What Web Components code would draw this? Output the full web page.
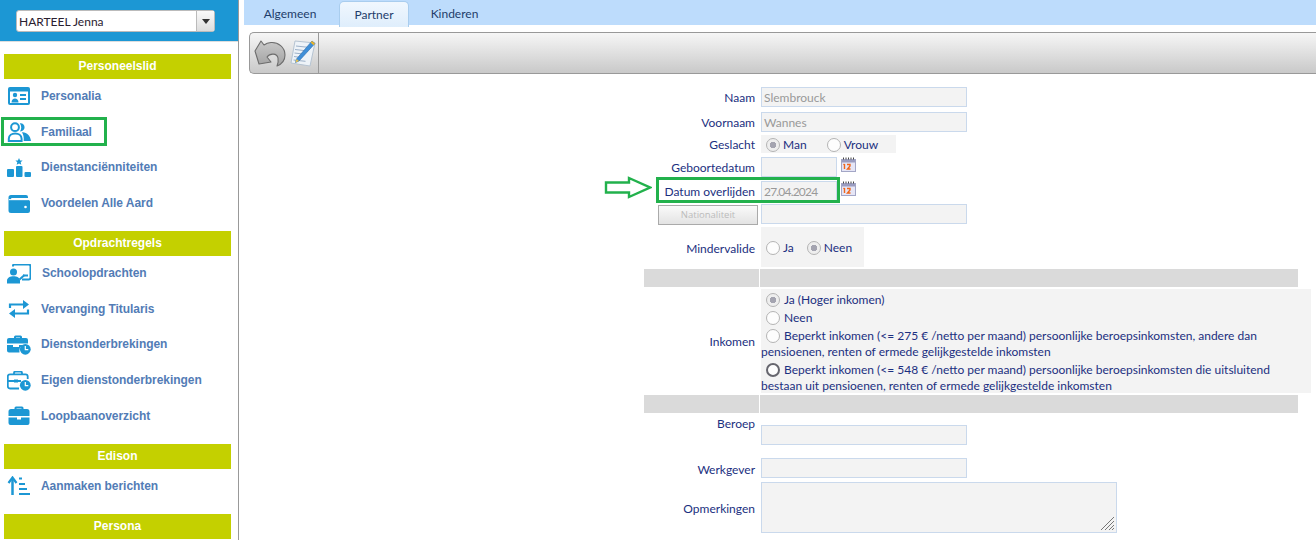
<!DOCTYPE html>
<html lang="nl"><head><meta charset="utf-8"><title>Familiaal</title>
<style>html,body{margin:0;padding:0;background:#fff;height:540px;overflow:hidden;font-family:Lato,"Open Sans",sans-serif}</style>
</head><body>
<app-shell>
  <side-bar slot="side" person="HARTEEL Jenna">
    <menu-section title="Personeelslid">
      <menu-item icon="card">Personalia</menu-item>
      <menu-item icon="family">Familiaal</menu-item>
      <menu-item icon="rank">Dienstanciënniteiten</menu-item>
      <menu-item icon="wallet">Voordelen Alle Aard</menu-item>
    </menu-section>
    <menu-section title="Opdrachtregels">
      <menu-item icon="school" shift>Schoolopdrachten</menu-item>
      <menu-item icon="swap">Vervanging Titularis</menu-item>
      <menu-item icon="caseclock">Dienstonderbrekingen</menu-item>
      <menu-item icon="caseoutline">Eigen dienstonderbrekingen</menu-item>
      <menu-item icon="case">Loopbaanoverzicht</menu-item>
    </menu-section>
    <menu-section title="Edison">
      <menu-item icon="sort">Aanmaken berichten</menu-item>
    </menu-section>
    <menu-section title="Persona"></menu-section>
  </side-bar>
  <tab-bar slot="main"><tab-item>Algemeen</tab-item><tab-item active>Partner</tab-item><tab-item>Kinderen</tab-item></tab-bar>
  <tool-bar slot="main"></tool-bar>
  <partner-form slot="main">
    <form-row label="Naam" h="25" pt="2"><text-field w="206" value="Slembrouck"></text-field></form-row>
    <form-row label="Voornaam" h="25" pt="2"><text-field w="206" value="Wannes"></text-field></form-row>
    <form-row label="Geslacht" h="20" lb="2"><radio-group w="135" h="18" gap="20"><radio-opt checked>Man</radio-opt><radio-opt>Vrouw</radio-opt></radio-group></form-row>
    <form-row label="Geboortedatum" h="24" pt="2"><text-field w="76"></text-field><cal-icon></cal-icon></form-row>
    <form-row label="Datum overlijden" h="24" pt="2"><text-field w="76" value="27.04.2024" ls="-.8"></text-field><cal-icon></cal-icon></form-row>
    <form-row h="24" pt="1"><nat-button slot="label">Nationaliteit</nat-button><text-field w="206"></text-field></form-row>
    <form-row label="Mindervalide" h="42"><radio-group w="103" h="40" gap="13"><radio-opt>Ja</radio-opt><radio-opt checked>Neen</radio-opt></radio-group></form-row>
    <form-sep></form-sep>
    <form-row label="Inkomen" h="106" lb="1">
      <income-box>
        <radio-opt checked block>Ja (Hoger inkomen)</radio-opt>
        <radio-opt block>Neen</radio-opt>
        <radio-opt block wrap>Beperkt inkomen (&lt;= 275 € /netto per maand) persoonlijke beroepsinkomsten, andere dan pensioenen, renten of ermede gelijkgestelde inkomsten</radio-opt>
        <radio-opt block wrap focus>Beperkt inkomen (&lt;= 548 € /netto per maand) persoonlijke beroepsinkomsten die uitsluitend bestaan uit pensioenen, renten of ermede gelijkgestelde inkomsten</radio-opt>
      </income-box>
    </form-row>
    <form-sep></form-sep>
    <form-row label="Beroep" h="41" pt="10" labeltop><text-field w="206"></text-field></form-row>
    <form-row label="Werkgever" h="26" pt="2"><text-field w="206"></text-field></form-row>
    <form-row label="Opmerkingen" h="58" lb="5"><text-area></text-area></form-row>
  </partner-form>
  <note-box style="left:1px;top:117px;width:100px;height:23px"></note-box>
  <note-box style="left:656px;top:177px;width:178px;height:20px"></note-box>
  <note-arrow style="left:604px;top:176px"></note-arrow>
</app-shell>
<script>
const def=(name,css,html,extra)=>{
  customElements.define(name,class extends HTMLElement{
    connectedCallback(){
      if(this.shadowRoot)return;
      const s=this.attachShadow({mode:'open'});
      s.innerHTML='<style>'+css+'</style>'+(typeof html==='function'?html(this):html);
      if(extra)extra(this,s);
    }
  });
};
const B='#1c97d4';
const ICONS={
card:`<rect x="1" y="0" width="22" height="18" rx="2" fill="${B}"/><rect x="3" y="4.500" width="18" height="11.500" fill="#fff"/><circle cx="8" cy="8" r="2.200" fill="${B}"/><path d="M4.500 15.500c0-5.400 7-5.400 7 0z" fill="${B}"/><path d="M13 8h6M13 12h6" stroke="${B}" stroke-width="2"/>`,
family:`<circle cx="8" cy="5.200" r="3.900" fill="none" stroke="${B}" stroke-width="2"/><path d="M12.800 1.300c5.600-.9 7 7.700.2 8.200 1.800-2.400 1.600-5.800-.2-8.200z" fill="${B}"/><path d="M1.800 19v-2.300c0-7 12.800-7 12.800 0V19z" fill="none" stroke="${B}" stroke-width="2"/><path d="M15 10.300c4.500-.4 8.500 3.300 9 8.700h-7.300c.3-3.500-.2-6.200-1.700-8.700z" fill="${B}"/>`,
rank:`<path d="M12 0l1.100 2.400 2.500.2-1.900 1.700.6 2.500-2.300-1.300-2.300 1.300.6-2.500-1.900-1.700 2.500-.2z" fill="${B}"/><rect x="0" y="11" width="7" height="8" rx="1" fill="${B}"/><rect x="9" y="8" width="6.500" height="11" rx="1" fill="${B}"/><rect x="17.500" y="14" width="6.500" height="5" rx="1" fill="${B}"/>`,
wallet:`<path d="M4 1h15a2 2 0 0 1 2 2v1H5a1 1 0 0 0 0 2h16.500a1.500 1.500 0 0 1 1.500 1.500V17a2 2 0 0 1-2 2H4a2.500 2.500 0 0 1-2.500-2.500V3.500A2.500 2.500 0 0 1 4 1z" fill="${B}"/><path d="M2 5h19.500v1.200H2z" fill="#fff" opacity=".9"/><circle cx="18.500" cy="13" r="1.300" fill="#fff"/>`,
school:`<path d="M6 2.500V1.800A1.300 1.300 0 0 1 7.300 .5h14.400A1.800 1.800 0 0 1 23.500 2.300v11.400a1.800 1.800 0 0 1-1.800 1.800H15" fill="none" stroke="${B}" stroke-width="2"/><path d="M16 11.500h5" stroke="${B}" stroke-width="2"/><path d="M12.500 15.500l5-4.500" stroke="${B}" stroke-width="2"/><circle cx="6.500" cy="8" r="3.500" fill="${B}"/><path d="M0 19.500v-2.800c0-5.800 13-5.800 13 0v2.800z" fill="${B}"/>`,
swap:`<path d="M3 9V5.500h14" fill="none" stroke="${B}" stroke-width="2.200"/><path d="M16 1l6 4.500-6 4.500z" fill="${B}"/><path d="M21 10.500v4H7" fill="none" stroke="${B}" stroke-width="2.200"/><path d="M8 10l-6 4.500 6 4.500z" fill="${B}"/>`,
caseclock:`<path d="M7 3V2a1.500 1.500 0 0 1 1.500-1.500h5A1.500 1.500 0 0 1 15 2v1h-2V2.500H9V3z" fill="${B}"/><path d="M2 3h17a2 2 0 0 1 2 2v3.500H0V5a2 2 0 0 1 2-2z" fill="${B}"/><path d="M0 10h6v2h6v-2h4a7 7 0 0 0-3.500 7.500H2a2 2 0 0 1-2-2z" fill="${B}"/><circle cx="18.300" cy="14.300" r="5.400" fill="${B}"/><path d="M18.300 11v3.600h3" fill="none" stroke="#fff" stroke-width="1.200"/>`,
caseoutline:`<path d="M7 3V2a1.500 1.500 0 0 1 1.500-1.500h5A1.500 1.500 0 0 1 15 2v1" fill="none" stroke="${B}" stroke-width="1.800"/><path d="M12 17.500H3A2.200 2.200 0 0 1 .8 15.300V5.500A2.200 2.200 0 0 1 3 3.300h15.500a2.200 2.200 0 0 1 2.200 2.200V8" fill="none" stroke="${B}" stroke-width="1.800"/><path d="M1 10h6M11 10h3" stroke="${B}" stroke-width="1.800"/><rect x="7" y="8.500" width="4" height="3" fill="${B}"/><circle cx="18.300" cy="14.300" r="5.400" fill="${B}"/><path d="M18.300 11v3.600h3" fill="none" stroke="#fff" stroke-width="1.200"/>`,
case:`<path d="M7.500 3V2A1.500 1.500 0 0 1 9 .5h6A1.500 1.500 0 0 1 16.500 2v1h-2V2.500h-5V3z" fill="${B}"/><path d="M4 3h16a2.500 2.500 0 0 1 2.500 2.500V10h-21V5.500A2.500 2.500 0 0 1 4 3z" fill="${B}"/><path d="M1.500 11.500H10v2h4v-2h8.500v5.500a2 2 0 0 1-2 2h-17a2 2 0 0 1-2-2z" fill="${B}"/>`,
sort:`<path d="M5.500 19V3" stroke="${B}" stroke-width="2.500"/><path d="M1.500 7l4-5.500 4 5.500" fill="none" stroke="${B}" stroke-width="2.200"/><path d="M12 2.500h3M12 8h6M12 13h8M12 18h11" stroke="${B}" stroke-width="2"/>`
};
def('app-shell',':host{display:flex;position:relative;width:1316px;height:540px;overflow:hidden}.s{flex:0 0 239px}.m{flex:1;min-width:0;display:flex;flex-direction:column}','<div class="s"><slot name="side"></slot></div><div class="m"><slot name="main"></slot></div><slot></slot>');
def('side-bar',`:host{display:block;width:238px;height:540px;border-right:1px solid #999;overflow:hidden;font-family:"Liberation Sans",Arial,sans-serif}
.top{background:#1c97d4;border-bottom:1px solid #ddd;padding:10px 0 0 16px;box-sizing:border-box;height:42px}
.sel{display:flex;width:199px;height:22px;background:#fff;border:1px solid #bbb;border-radius:3px;box-sizing:border-box;font:12px Lato,sans-serif;color:#2a2030}
.sel span{flex:1;padding-left:2px;line-height:21px}
.sel i{flex:0 0 17px;border-left:1px solid #bbb;background:linear-gradient(#fafafa,#ddd);display:flex;align-items:center;justify-content:center}
.sel i:after{content:"";border:4px solid transparent;border-top:5px solid #333;border-bottom:0}
.list{padding-top:12px}`,h=>`<div class="top"><div class="sel"><span>${h.getAttribute('person')}</span><i></i></div></div><div class="list"><slot></slot></div>`);
def('menu-section',`:host{display:block;margin-bottom:9.6px}
h2{margin:0 7px 0 4px;height:25px;background:#c4d000;color:#fff;font:bold 12px/25.600px "Liberation Sans",sans-serif;text-align:center}`,h=>`<h2>${h.getAttribute('title')}</h2><slot></slot>`);
def('menu-item',`:host{display:flex;align-items:center;height:35.6px;padding-left:7px;color:#527cb6;font:bold 12px "Liberation Sans",sans-serif;letter-spacing:-.05px}
svg{flex:0 0 24px;width:24px;height:20px;margin-right:10px}
span{margin-bottom:1px}
:host([shift]) span{margin-left:1px}`,h=>`<svg viewBox="0 0 24 20">${ICONS[h.getAttribute('icon')]}</svg><span><slot></slot></span>`);
def('tab-bar',`:host{flex:none;display:flex;height:25px;margin-left:5px;background:#bddcfc;padding-left:3px;font:12px Lato,sans-serif;color:#1d3c6a}`,'<slot></slot>');
def('tab-item',`:host{display:block;box-sizing:border-box;width:91px;height:25px;text-align:center;line-height:28px}
:host(:first-child){width:92px;padding-right:6px}
:host([active]){width:70px;height:26px;margin-top:1px;line-height:26px;background:linear-gradient(#f0f7fe,#dfeefc);border:1px solid #a9cdee;border-bottom:0;border-radius:5px 5px 0 0}`,'<slot></slot>');
def('tool-bar',`:host{flex:none;display:flex;box-sizing:border-box;height:42px;margin:7px 0 0 10px;border:1px solid #999;border-right:0;border-radius:5px 0 0 5px;background:linear-gradient(#f6f6f6,#c9c9c9)}
.g{display:flex;align-items:center;gap:4px;padding-left:4px;width:69px;border-right:1px solid #999;box-sizing:border-box}
svg{flex:none}`,
`<div class="g"><svg width="32" height="30" viewBox="0 0 32 30"><defs><linearGradient id="u" x1="0" y1="0" x2="0" y2="1"><stop offset="0" stop-color="#c9c9c9"/><stop offset="1" stop-color="#a2a2a2"/></linearGradient></defs><path d="M1 13L5 26L17 24L13 19C16 15 23 15 24 20C24.500 23 24 26 23 28C28 26 31 23 31 17C31 9 24 4 17 4.500C14 4.700 12 5.500 10 7L7 3Z" fill="url(#u)" stroke="#6c6c6c" stroke-width="1.100" stroke-linejoin="round"/></svg>
<svg width="26" height="28" viewBox="0 0 26 28"><path d="M5 2l20 2-5 23-19-3z" fill="#eef3f8" stroke="#b6c4d2"/><path d="M6 7l14 1.500M5 10.500l13 1.500M4.500 14l10 1.200M4 17.500l7 1M3.500 21l12 1.300" stroke="#9bb0c8"/><path d="M22 2l3 2.500L9 22l-3.500 1.500L6.500 20z" fill="#3f8fd8" stroke="#2a6cae" stroke-width=".6"/><path d="M22 2l3 2.500-1.500 1.700-3-2.600z" fill="#e7b32a"/><path d="M5.500 23.500L6.500 20l2.500 2z" fill="#e7c04a"/></svg></div>`);
def('partner-form',`:host{flex:none;display:block;margin:11px 0 0 405px;width:654px;font:12px Lato,sans-serif;color:#1b2f80}`,'<slot></slot>');
def('form-row',`:host{display:grid;grid-template-columns:116px 1fr;column-gap:1px;box-sizing:border-box}
.l{padding-right:5px;display:flex;align-items:center;justify-content:flex-end;line-height:16px;white-space:nowrap}
.v{display:flex;align-items:flex-start;min-width:0}`,
h=>{const a=k=>h.getAttribute(k);
 h.style.height=a('h')+'px';
 return `<div class="l" style="padding-top:1px;padding-bottom:${a('lb')||0}px;${h.hasAttribute('labeltop')?'align-items:flex-start':''}"><slot name="label">${a('label')||''}</slot></div><div class="v" style="padding-top:${a('pt')||0}px"><slot></slot></div>`});
def('form-sep',`:host{display:grid;grid-template-columns:115px 538px;column-gap:1px;height:18px;margin:0 0 2px}div{background:#dadada}`,'<div></div><div></div>');
def('text-field',`:host{display:block;flex:none;box-sizing:border-box;height:20px;background:#f3f3f3;border:1px solid #cad9ec;color:#999;padding-left:2px;line-height:20px;white-space:nowrap}`,h=>{h.style.width=h.getAttribute('w')+'px';if(h.getAttribute('ls'))h.style.letterSpacing=h.getAttribute('ls')+'px';return h.getAttribute('value')||''});
def('text-area',`:host{display:block;position:relative;box-sizing:border-box;width:356px;height:51px;background:#f3f3f3;border:1px solid #cad9ec}svg{position:absolute;right:1px;bottom:1px}`,'<svg width="15" height="15" viewBox="0 0 15 15"><path d="M1 14L14 1M5 14L14 5M9 14L14 9M12 14l2-2" stroke="#777" stroke-width="1"/></svg>');
def('cal-icon',`:host{display:block;flex:none;width:15px;height:15px;margin-left:4px}`,`<svg width="15" height="15" viewBox="0 0 15 15"><rect x=".5" y="2.500" width="14" height="12" fill="#e6e6f6" stroke="#a3a6c6"/><rect x="1" y="3" width="13" height="2.500" fill="#9a9cc0"/><path d="M2 1.500h1M4.500 1.500h1M7 1.500h1M9.500 1.500h1M12 1.500h1" stroke="#444" stroke-width="2"/><path d="M3.500 7v5M6 7.500h3v1.500L6.500 12h3M2.500 8l1-1" fill="none" stroke="#f0661a" stroke-width="1.400"/></svg>`);
def('nat-button',`:host{display:block;box-sizing:border-box;width:100px;height:20px;margin:-1px -3px 0 0;background:linear-gradient(#fafafa,#e3e3e3);border:1px solid #aaa;color:#bbb;font:9.500px "Open Sans",sans-serif;text-align:center;line-height:18px}`,'<slot></slot>');
def('radio-group',`:host{display:flex;align-items:center;background:#f3f3f3;padding-left:5px;box-sizing:border-box}`,h=>{h.style.width=h.getAttribute('w')+'px';h.style.height=h.getAttribute('h')+'px';h.style.gap=h.getAttribute('gap')+'px';return '<slot></slot>'});
def('income-box',`:host{display:block;flex:none;box-sizing:border-box;width:550px;height:104px;background:#f3f3f3;line-height:16px;padding-top:2px}`,'<slot></slot>');
def('radio-opt',`:host{display:inline-flex;align-items:center;gap:3px;white-space:nowrap;padding-top:1px}
:host([block]){display:block;height:18px;line-height:18px;padding-top:0}
:host([wrap]){height:auto;line-height:16px;white-space:normal;padding-top:1px;margin-bottom:1px}
.r{display:inline-block;box-sizing:border-box;width:14px;height:14px;border-radius:50%;border:1.500px solid #b4b4b4;background:#fdfdfd;vertical-align:-3px;margin:0 4px 0 5px}
:host(:not([block])) .r{margin:0}
:host([checked]) .r{background:radial-gradient(circle,#a4a4b0 0 3px,#eee 3.500px)}
:host([focus]) .r{border:2px solid #66666e}`,h=>`<span class="r"></span><slot></slot>`);
def('note-box',`:host{position:absolute;display:block;border:3px solid #22b14c;pointer-events:none}`,'');
def('note-arrow',`:host{position:absolute;display:block}`,'<svg width="48" height="23" viewBox="0 0 48 23" style="display:block"><path d="M2 6.500h23V2l21 9.500L25 21v-4.500H2z" fill="#fff" stroke="#22b14c" stroke-width="2.400"/></svg>');
</script>
</body></html>
